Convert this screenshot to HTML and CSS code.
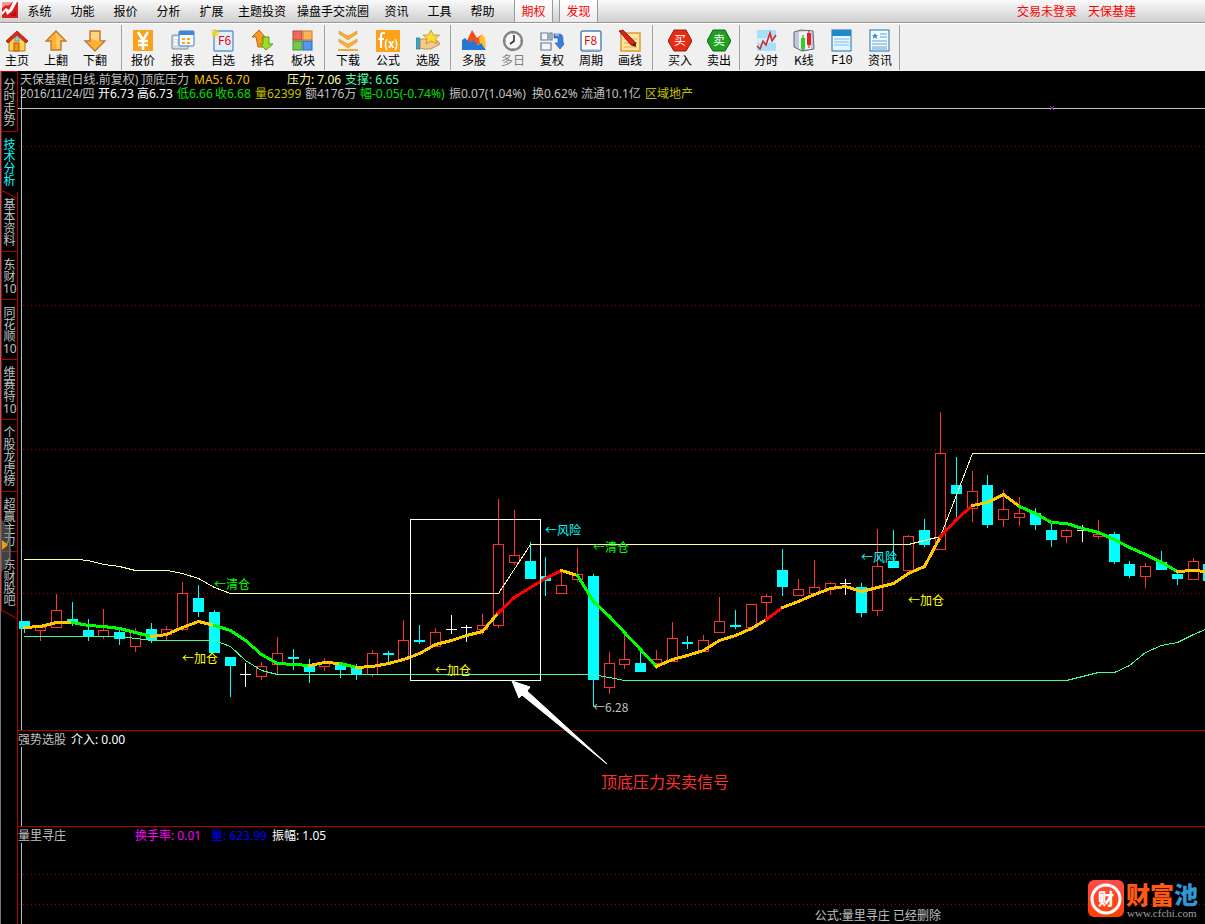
FILE: index.html
```html
<!DOCTYPE html>
<html lang="zh-CN">
<head>
<meta charset="utf-8">
<title>天保基建 日线</title>
<link rel="stylesheet" href="styles.css">
</head>
<body>
<header class="menubar">
  <svg class="app-mark" width="18" height="20" viewBox="0 0 18 20" aria-hidden="true"><rect x="2" y="2" width="16" height="16" fill="#d81e1e"/><path d="M2 2h11L8 6 6 5 2 8z" fill="#f49a9a"/><path d="M2 12l4-4 3 2 4-8h4l-5 9-5 4-1-4-4 4z" fill="#fff"/><path d="M10 16l6-5v5z" fill="#b01010"/></svg>
  <nav class="menu">
    <button>系统</button><button>功能</button><button>报价</button><button>分析</button><button>扩展</button><button class="wide">主题投资</button><button class="wider">操盘手交流圈</button><button>资讯</button><button>工具</button><button>帮助</button>
  </nav>
  <div class="hot"><button>期权</button><button>发现</button></div>
  <div class="account"><a href="#">交易未登录</a><a href="#">天保基建</a></div>
</header>

<div class="toolbar">
  <div class="group g1">
    <button><svg viewBox="0 0 24 24"><path d="M4 12v10h16V12l-8-8z" fill="#ffd24a" stroke="#b07818"/><path d="M1 12L12 2l11 10-2 2-9-8-9 8z" fill="#e02818" stroke="#a01008" stroke-width=".8"/><rect x="9" y="14" width="5" height="8" fill="#f09020" stroke="#a86010"/><rect x="10" y="8" width="4" height="4" fill="#8fd8ff" stroke="#4080b0" stroke-width=".7"/></svg>主页</button>
    <button><svg viewBox="0 0 24 24"><path d="M12 2l10 10h-5v9H7v-9H2z" fill="#ffb030" stroke="#b87838" stroke-width="1.3"/><path d="M12 4l7 7h-3v9h-4z" fill="#ffc860"/></svg>上翻</button>
    <button><svg viewBox="0 0 24 24"><path d="M12 22l10-10h-5V2H7v10H2z" fill="#ffb030" stroke="#b87838" stroke-width="1.3"/><path d="M8 3h8v10h3l-11-3z" fill="#ffd480"/></svg>下翻</button>
  </div>
  <div class="group g2">
    <button><svg viewBox="0 0 24 24"><rect x="2" y="1" width="20" height="21" fill="#faa21a"/><path d="M7 3l5 8 5-8M12 11v10M7 12h10M7 16h10" fill="none" stroke="#fff" stroke-width="2.600"/></svg>报价</button>
    <button><svg viewBox="0 0 24 24"><rect x="1" y="6" width="16" height="14" rx="1" fill="#d8dee6" stroke="#788898"/><path d="M3 9h4M3 12h3M3 15h3" stroke="#fff" stroke-width="2"/><rect x="8" y="2" width="15" height="15" rx="1" fill="#f7fbff" stroke="#3878c0"/><path d="M8 4h15" stroke="#3c86dc" stroke-width="4"/><path d="M11 9h3v2h-3zM16 9h3v2h-3zM11 13h3v2h-3zM16 13h3v2h-3z" fill="#f5a623"/></svg>报表</button>
    <button><svg viewBox="0 0 24 24"><rect x="3" y="2" width="19" height="20" rx="1" fill="#dff0fc" stroke="#5f96c8" stroke-width="1.4"/><path d="M4 0v9M0 4h9M1 1l6 6M7 1L1 7" stroke="#f4d020" stroke-width="1.2"/><text x="7" y="16" font-size="12" fill="#f00000">F6</text></svg>自选</button>
    <button><svg viewBox="0 0 24 24"><path d="M8 1l6 7h-3l3 10H7L5 8H1z" fill="#f69a24" stroke="#b86410"/><path d="M15 21l-6-6h3V8h6v7h4z" fill="#9be028" stroke="#58a010"/></svg>排名</button>
    <button><svg viewBox="0 0 24 24"><rect x="2" y="2" width="9" height="9" fill="#f06a5c" stroke="#c04038"/><rect x="12" y="2" width="9" height="9" fill="#ffb45a" stroke="#d07820"/><rect x="2" y="12" width="9" height="9" fill="#78c850" stroke="#409028"/><rect x="12" y="12" width="9" height="9" fill="#5a96ea" stroke="#2868c0"/></svg>板块</button>
  </div>
  <div class="group g3">
    <button><svg viewBox="0 0 24 24"><path d="M3 2l9 5 9-5v3l-9 6-9-6zM3 10l9 5 9-5v3l-9 6-9-6z" fill="#f6b13c" stroke="#dc9424" stroke-width=".6"/><path d="M2 20h20v2H2z" fill="#f0a83a"/></svg>下载</button>
    <button><svg viewBox="0 0 24 24"><rect x="0" y="1" width="24" height="22" fill="#faa21a"/><path d="M9 4H7q-2 0-2 3v12M2 10h6" fill="none" stroke="#fff" stroke-width="2"/><text x="8" y="19" font-size="11" font-weight="bold" fill="#fff">(x)</text></svg>公式</button>
    <button><svg viewBox="0 0 24 24"><path d="M0 9h4v11H0z" fill="#3aa8c8" stroke="#207890" stroke-width=".7"/><path d="M4 11c4-2 6-1 9 1h9l2 3-9 5H8l-4-1z" fill="#f5c890" stroke="#b07838" stroke-width=".8"/><path d="M15 1l2.500 5 6 0-4 4 1.500 5-6-3-5 3 1-5-4-4h5.500z" fill="#ffd83c" stroke="#b89020" stroke-width=".8"/></svg>选股</button>
  </div>
  <div class="group g4">
    <button><svg viewBox="0 0 24 24"><path d="M4 14L10 1l5 8 4-3 4 10z" fill="#f0501c"/><path d="M17 9l3-4 3 4 1 10-6-3z" fill="#ffc030"/><path d="M0 21V11l3-2 5 5 3-3 5 5 3-2 5 7z" fill="#2478d4"/></svg>多股</button>
    <button disabled><svg viewBox="0 0 24 24"><circle cx="12" cy="12" r="9" fill="#f6f6f6" stroke="#858585" stroke-width="2.400"/><path d="M13 6v6l-4 3" fill="none" stroke="#333" stroke-width="1.600"/><path d="M12 4v1M12 19v1M4 12h1M19 12h1" stroke="#777"/></svg>多日</button>
    <button><svg viewBox="0 0 24 24"><path d="M1 4h7v7H1zM1 14h10v7H1zM10 4h2v7h-2z" fill="#f4f6fa" stroke="#6a7a94" stroke-width="1.200"/><path d="M14 9V5h5c4 0 4 3 4 9h2l-5 6-5-6h3V9z" fill="#3c7ce0" stroke="#1c50a8" stroke-width=".6"/><path d="M15 6h4" stroke="#a8c8f8" stroke-width="1.500"/></svg>复权</button>
    <button><svg viewBox="0 0 24 24"><rect x="2" y="2" width="20" height="20" rx="2" fill="#fff" stroke="#4f82b8" stroke-width="1.500"/><path d="M3 21h19V4" fill="none" stroke="#88a8c8"/><text x="5" y="16" font-size="12" fill="#f00000">F8</text></svg>周期</button>
    <button><svg viewBox="0 0 24 24"><rect x="3" y="4" width="19" height="18" fill="#ffe6a0" stroke="#e09830" stroke-width="1.500"/><path d="M6 10h13M6 14h13M6 18h13" stroke="#e8a840"/><path d="M1 2l4-1 13 13-1 3-4-1z" fill="#d82020" stroke="#801010" stroke-width=".8"/><path d="M14 16l4 2-1-4z" fill="#302010"/></svg>画线</button>
  </div>
  <div class="group g5">
    <button><svg viewBox="0 0 24 24"><path d="M6 1h12l6 11-6 10H6L0 12z" fill="#e82c14" stroke="#8e2010"/><text x="6" y="16" font-size="12" fill="#fff">买</text></svg>买入</button>
    <button><svg viewBox="0 0 24 24"><path d="M6 1h12l6 11-6 10H6L0 12z" fill="#20a020" stroke="#0a6010"/><text x="6" y="16" font-size="12" fill="#fff">卖</text></svg>卖出</button>
  </div>
  <div class="group g6">
    <button><svg viewBox="0 0 24 24"><rect x="3" y="1" width="19" height="21" rx="1" fill="#a8e0f8"/><path d="M3 9h19v5H3z" fill="#d0f0fc"/><path d="M3 17l3 3 3-8 3 4 4-12 2 8 4-6" fill="none" stroke="#e02020" stroke-width="1.500"/></svg>分时</button>
    <button><svg viewBox="0 0 24 24"><path d="M2 3l7-2 12 1 1 18-12 2-8-4z" fill="#c4c8d4" stroke="#606880"/><path d="M7 3l12-1v18H7z" fill="#f4f4f8"/><path d="M11 6v16" stroke="#108010"/><rect x="9" y="9" width="4" height="11" fill="#30d020"/><path d="M17 1v18" stroke="#a01010"/><rect x="15" y="4" width="4" height="12" fill="#e82020"/></svg>K线</button>
    <button><svg viewBox="0 0 24 24"><rect x="2" y="1" width="19" height="21" fill="#e4f4fc" stroke="#1870b0"/><path d="M2 1h19v6H2z" fill="#1e88cc"/><path d="M4 10h15M4 13h15M4 16h15" stroke="#80c0e8"/></svg><span class="serif">F10</span></button>
    <button><svg viewBox="0 0 24 24"><rect x="2" y="1" width="19" height="21" fill="#f8fcff" stroke="#1870b0"/><path d="M7 4l1 2h2L8.500 7.500 9 10 7 8.500 5 10l.5-2.500L4 6h2z" fill="#3090d8"/><path d="M12 5h7M12 8h7M4 12h15M4 15h15M4 18h15M4 20h15" stroke="#50a0d8"/></svg>资讯</button>
  </div>
</div>

<div class="workspace">
  <nav class="sidebar">
    <button class="tab">分时走势</button>
    <button class="tab active">技术分析</button>
    <button class="tab after-active">基本资料<svg class="slant" width="17" height="8" viewBox="0 0 17 8" aria-hidden="true"><path d="M1 .5h2l13 7"/></svg></button>
    <button class="tab">东财10</button>
    <button class="tab">同花顺10</button>
    <button class="tab">维赛特10</button>
    <button class="tab">个股龙虎榜</button>
    <button class="tab">超赢主力</button>
    <button class="tab">东财股吧</button>
    <div class="tail"><svg class="slant" width="17" height="8" viewBox="0 0 17 8" aria-hidden="true"><path d="M1 .5h2l13 7"/></svg></div>
    <button class="drawer" aria-label="展开"><svg width="10" height="54" viewBox="0 0 10 54"><path d="M0 0l9 10v32L0 54z" fill="#777" fill-opacity=".55"/><path d="M9 10v32" stroke="#888"/><path d="M1 21l6 5-6 5z" fill="#f0a000"/></svg></button>
  </nav>

  <main class="charts">
    <section class="panel price">
      <div class="title"><span>天保基建(日线.前复权)</span><span>顶底压力</span><span class="ma">MA5: 6.70</span><span class="press">压力: 7.06</span><span class="support">支撑: 6.65</span></div>
      <div class="quote"><span class="date">2016/11/24/四</span><span class="white">开6.73</span><span class="white">高6.73</span><span class="green">低6.66</span><span class="green">收6.68</span><span class="olive">量62399</span><span>额4176万</span><span class="green">幅-0.05(-0.74%)</span><span>振0.07(1.04%)</span><span>换0.62%</span><span>流通10.1亿</span><span class="olive">区域地产</span></div>
      <svg class="plot" width="100%" height="628">
        <g id="plot" transform="translate(-18 -102)">
          <g id="candles" shape-rendering="crispEdges"></g>
          <g id="lines" fill="none"></g>
          <g class="signals">
            <text x="214" y="589" fill="#00ff00">←清仓</text>
            <text x="182" y="663" fill="#ffff00">←加仓</text>
            <text x="435" y="675" fill="#ffff00">←加仓</text>
            <text x="545" y="535" fill="#00ffff">←风险</text>
            <text x="593" y="552" fill="#00ff00">←清仓</text>
            <text x="861" y="562" fill="#00ffff">←风险</text>
            <text x="908" y="605" fill="#ffff00">←加仓</text>
            <text x="593" y="712" fill="#c0c0c0">←6.28</text>
          </g>
          <path d="M1050 106l4 4M1054 106l-4 4" stroke="#c000c0"/>
          <rect x="410.500" y="519.500" width="130" height="161" fill="none" stroke="#fff"/>
          <path d="M512 681l18 6-3 4 80 73-85-69-3 3z" fill="#fff" stroke="#fff"/>
          <text class="note" x="601" y="788">顶底压力买卖信号</text>
        </g>
      </svg>
    </section>
    <section class="panel pick">
      <div class="title"><span>强势选股</span><span class="white">介入: 0.00</span></div>
    </section>
    <section class="panel volume">
      <div class="title"><span>量里寻庄</span><span class="magenta">换手率: 0.01</span><span class="blue">量: 623.99</span><span class="white">振幅: 1.05</span></div>
      <footer class="footer">
        <span class="status">公式:量里寻庄 已经删除</span>
        <a class="brand" href="#">
          <svg width="38" height="38" viewBox="0 0 38 38" aria-hidden="true"><defs><linearGradient id="bg" x1="0" y1="0" x2="0" y2="1"><stop offset="0" stop-color="#ff4a4a"/><stop offset="1" stop-color="#ff4000"/></linearGradient></defs><rect x="1" y="0" width="36" height="37" rx="6" fill="url(#bg)"/><circle cx="19" cy="19" r="14" fill="none" stroke="#fff" stroke-width="3"/><text x="11" y="25" font-size="16" font-weight="900" fill="#fff">财</text></svg>
          <span class="brand-text"><strong>财富<em>池</em></strong><small>www.cfchi.com</small></span>
        </a>
      </footer>
    </section>
  </main>
</div>
<script src="chart.js"></script>
</body>
</html>
```
FILE: styles.css
```css
* { box-sizing: border-box; }

body {
  margin: 0;
  min-height: 100vh;
  display: flex;
  flex-direction: column;
  background: #000;
  color: #c0c0c0;
  font: 12px/14px "Noto Sans", "Noto Sans CJK SC", sans-serif;
  overflow-x: hidden;
}

button {
  margin: 0;
  padding: 0;
  border: 0;
  background: none;
  color: inherit;
  font: inherit;
}

a { color: inherit; text-decoration: none; }

/* menu bar */
.menubar {
  display: flex;
  height: 23px;
  background: linear-gradient(#fafafa, #cfcfcf);
  border-bottom: 1px solid #999;
  color: #000;
  font-family: "Noto Sans CJK SC", sans-serif;
}
.menu { display: flex; }
.menu button { width: 43px; }
.menu .wide { width: 58px; }
.menu .wider { width: 84px; }
.hot { display: flex; gap: 6px; margin-left: 10px; color: #f00; }
.hot button {
  width: 39px;
  background: linear-gradient(#fff, #ececec);
  border: solid #999;
  border-width: 0 1px;
}
.account {
  display: flex;
  align-items: center;
  gap: 11px;
  margin-left: auto;
  padding-right: 69px;
  color: #f00;
}

/* toolbar */
.toolbar {
  display: flex;
  height: 48px;
  background: #f0f0f0;
  border-top: 1px solid #fff;
  color: #000;
  font-family: "Noto Sans CJK SC", sans-serif;
}
.group {
  display: flex;
  margin: 1px 0;
  border-right: 1px solid #a0a0a0;
}
.group button {
  display: flex;
  flex-direction: column;
  align-items: center;
  width: 34px;
  padding-top: 4px;
  line-height: 14px;
}
.group svg { width: 24px; height: 24px; flex: none; }
.group button:disabled { color: #808080; }
.serif { font-family: "Liberation Mono", monospace; line-height: 16px; }
.g1 { gap: 5px; padding-right: 9px; }
.g2 { gap: 6px; padding: 0 4px; }
.g3 { gap: 6px; padding: 0 5px 0 6px; }
.g4 { gap: 5px; padding: 0 5px 0 6px; }
.g5 { gap: 5px; padding: 0 3px 0 10px; }
.g6 { gap: 4px; padding: 0 2px 0 9px; }

/* workspace */
.workspace { display: flex; flex: 1; }

.sidebar {
  position: relative;
  display: flex;
  flex-direction: column;
  width: 18px;
  border-left: 1px solid #707878;
}
.tab {
  position: relative;
  padding: 7px 1px 4px;
  border: solid #b00000;
  border-width: 1px 1px 0;
  line-height: 12px;
  text-align: center;
}
.tab.active { color: #0ff; border-right-color: #000; }
.tab.after-active { border-top-color: #000; }
.slant {
  position: absolute;
  left: -1px;
  top: -1px;
  fill: none;
  stroke: #d00000;
}
.tail { position: relative; flex: 1; border-right: 1px solid #b00000; }
.tail .slant { left: 0; top: 0; }
.drawer { position: absolute; left: 0; top: 448px; height: 54px; }

.charts {
  display: flex;
  flex-direction: column;
  flex: 1;
  min-width: 0;
}
.panel {
  --dots: linear-gradient(90deg, #a80000 1px, transparent 1px);
  position: relative;
}
.panel + .panel { border-top: 1px solid #b00000; }
.panel::before {
  content: "";
  position: absolute;
  left: 3px;
  top: 16px;
  bottom: 0;
  width: 1px;
  background: #c0c0c0;
}
.title, .quote { position: relative; display: grid; white-space: nowrap; }
.title { padding-top: 2px; }
.quote { padding: 0 0 1px 2px; }
.date { font-family: "Liberation Sans", "Noto Sans CJK SC", sans-serif; }

.price {
  background-image: linear-gradient(#c0c0c0, #c0c0c0), var(--dots), var(--dots), var(--dots), var(--dots);
  background-size: 100% 1px, 4px 1px, 4px 1px, 4px 1px, 4px 1px;
  background-position: 0 37px, 1px 75px, 1px 234px, 1px 378px, 1px 522px;
  background-repeat: repeat-x;
}
.price .title { grid-template-columns: 121px 53px 93px 58px auto; padding-left: 2px; }
.quote { grid-template-columns: 78px 39px 40px 38px 40px 50px 55px 89px 83px 49px 64px auto; }
.plot { display: block; overflow: visible; position: relative; z-index: 1; }
.signals { font-size: 12px; font-family: "Noto Sans CJK SC", sans-serif; }
.note { font: 16px "Noto Sans CJK SC", sans-serif; fill: #ff3030; }

.pick { height: 96px; }
.pick .title { grid-template-columns: 53px auto; }

.volume {
  display: flex;
  flex-direction: column;
  justify-content: space-between;
  flex: 1;
  background-image: var(--dots), var(--dots);
  background-size: 4px 1px;
  background-position: 1px 47px, 1px 77px;
  background-repeat: repeat-x;
}
.volume .title { grid-template-columns: 117px 76px 61px auto; }

.footer {
  position: relative;
  display: flex;
  justify-content: flex-end;
  align-items: flex-end;
  gap: 146px;
  padding: 0 7px 6px 0;
}
.status { height: 9px; }
.brand { display: flex; gap: 1px; }
.brand-text { display: flex; flex-direction: column; }
.brand strong {
  color: #ff5a14;
  font: 900 24px/28px "Noto Sans CJK SC", sans-serif;
}
.brand em { color: #3098d8; font-style: normal; }
.brand small { color: #a0a0a0; font: 11px/10px "Liberation Serif", serif; padding-left: 1px; }

.white { color: #fff; }
.green { color: #00e000; }
.olive { color: #c0c000; }
.ma { color: #ffc000; }
.press { color: #ffffa0; }
.support { color: #50ffb0; }
.magenta { color: #f0f; }
.blue { color: #00f; }
```
FILE: chart.js
```javascript
const NS = "http://www.w3.org/2000/svg";
const RED = "#ff3030", CYAN = "#00ffff", WHITE = "#ffffff";

// centre x, type, high, body top, body bottom, low
const candles = [
  [24,"c",621,621,629,633],[40,"r",627,627,630,641],[56,"r",594,610,627,627],[72,"c",602,619,622,626],
  [88,"c",619,630,636,641],[103,"r",609,630,636,639],[119,"c",629,632,639,645],[135,"r",628,632,646,652],
  [151,"c",623,629,640,643],[166,"r",626,629,634,641],[182,"r",582,593,629,631],[198,"c",585,598,612,617],
  [214,"c",610,612,653,653],[230,"c",657,657,666,697],[245,"w",663,674,674,687],[261,"r",662,666,676,680],
  [277,"r",637,653,664,675],[293,"c",649,657,659,670],[309,"c",659,666,672,683],[324,"r",658,662,666,671],
  [340,"c",664,665,670,678],[356,"c",664,668,674,680],[372,"r",650,653,674,677],[388,"c",651,653,655,662],
  [403,"r",620,640,659,660],[419,"c",625,640,642,644],[435,"r",628,632,646,646],[451,"w",615,629,629,634],
  [466,"w",625,627,627,642],[482,"r",614,625,629,635],[498,"r",499,544,625,628],[514,"r",510,555,562,565],
  [530,"c",542,561,579,579],[545,"c",557,576,581,596],[561,"r",569,585,593,593],[577,"r",548,574,579,582],
  [593,"c",574,576,680,707],[609,"r",652,663,687,694],[624,"r",633,659,664,669],[640,"c",650,663,672,672],
  [656,"r",650,659,663,663],[672,"r",622,638,661,661],[687,"c",636,642,644,649],[703,"r",635,640,651,651],
  [719,"r",597,621,632,632],[735,"c",610,625,627,629],[751,"r",604,604,627,631],[766,"r",594,596,602,619],
  [782,"c",549,570,587,596],[798,"r",579,589,595,595],[814,"r",560,587,593,593],[830,"r",582,583,589,595],
  [845,"w",579,583,583,595],[861,"c",583,587,613,617],[877,"r",529,566,610,616],[893,"c",530,561,568,568],
  [908,"r",535,536,570,570],[924,"c",519,530,545,547],[940,"r",412,453,549,549],[956,"c",457,485,494,517],
  [972,"r",471,491,508,522],[987,"c",475,485,525,528],[1003,"r",490,509,519,527],[1019,"r",497,513,517,526],
  [1035,"c",508,513,525,530],[1051,"c",524,530,540,547],[1066,"r",529,530,536,543],[1082,"w",525,530,530,542],
  [1098,"r",520,534,536,539],[1114,"c",532,534,562,564],[1129,"c",561,564,576,578],[1145,"r",563,566,576,588],
  [1161,"c",551,562,570,570],[1177,"c",572,574,579,585],[1193,"r",558,561,579,579],[1208,"c",564,564,581,581]
];

// colour, width, points
const lines = [
  ["#ffffa0",1,"24,559 77,559 88,560 103,564 119,566 135,570 167,570 182,573 198,578 214,587 230,593 498,593 530,544 908,544 940,536 972,453 1205,453"],
  ["#40ffa0",1,"24,636 120,636 151,640 214,640 230,646 245,660 261,670 277,674 593,674 624,680 1066,680 1098,672 1114,672 1129,665 1145,652 1161,645 1177,642 1193,634 1205,629"],
  ["#ffc800",3,"24,627 40,626 56,622 72,622"],
  ["#00ff00",3,"72,622 88,625 103,626 119,628 135,632 151,636"],
  ["#ffc800",3,"151,636 166,634 182,627 198,621 214,625"],
  ["#00ff00",3,"214,625 230,630 245,640 261,654 277,663 309,665"],
  ["#ffc800",3,"309,665 324,662 340,663"],
  ["#00ff00",3,"340,663 356,667"],
  ["#ffc800",3,"356,667 372,666 388,663 403,659 419,653 435,644 451,640 466,635 482,631 498,612"],
  ["#ff0000",3,"498,612 514,597 530,587 545,578 561,570"],
  ["#ffc800",3,"561,570 577,575"],
  ["#00ff00",3,"577,575 593,601 609,616 624,632 640,649 656,666"],
  ["#ffc800",3,"656,666 672,659 687,655 703,650 719,640 735,635 751,628 766,619"],
  ["#ff0000",3,"766,619 782,607"],
  ["#ffc800",3,"782,607 798,601 814,594 830,588 845,586 861,591 877,587 893,583 908,573 924,566 940,536"],
  ["#ff0000",3,"940,536 956,519 972,505"],
  ["#ffc800",3,"972,505 987,502 1003,494 1019,506"],
  ["#00ff00",3,"1019,506 1035,513 1051,522 1066,523 1082,528 1098,532 1114,539 1129,547 1145,554 1161,562 1177,571"],
  ["#ffc800",3,"1177,571 1193,570 1205,571"]
];

function add(parent, name, attrs) {
  const el = document.createElementNS(NS, name);
  for (const key in attrs) el.setAttribute(key, attrs[key]);
  parent.appendChild(el);
}

const candleLayer = document.getElementById("candles");
for (const [x, type, high, top, bottom, low] of candles) {
  if (type === "r") {
    add(candleLayer, "rect", { x, y: high, width: 1, height: top - high, fill: RED });
    add(candleLayer, "rect", { x, y: bottom, width: 1, height: low - bottom, fill: RED });
    add(candleLayer, "rect", { x: x - 4.5, y: top + 0.5, width: 10, height: bottom - top, fill: "none", stroke: RED });
  } else {
    const color = type === "w" ? WHITE : CYAN;
    add(candleLayer, "rect", { x, y: high, width: 1, height: low - high, fill: color });
    add(candleLayer, "rect", { x: x - 5, y: top, width: 11, height: Math.max(1, bottom - top), fill: color });
  }
}

const lineLayer = document.getElementById("lines");
for (const [stroke, width, points] of lines) {
  add(lineLayer, "polyline", {
    points, stroke, "stroke-width": width, "stroke-linecap": "square",
    "shape-rendering": "crispEdges", transform: "translate(0.5 0.5)"
  });
}
```
